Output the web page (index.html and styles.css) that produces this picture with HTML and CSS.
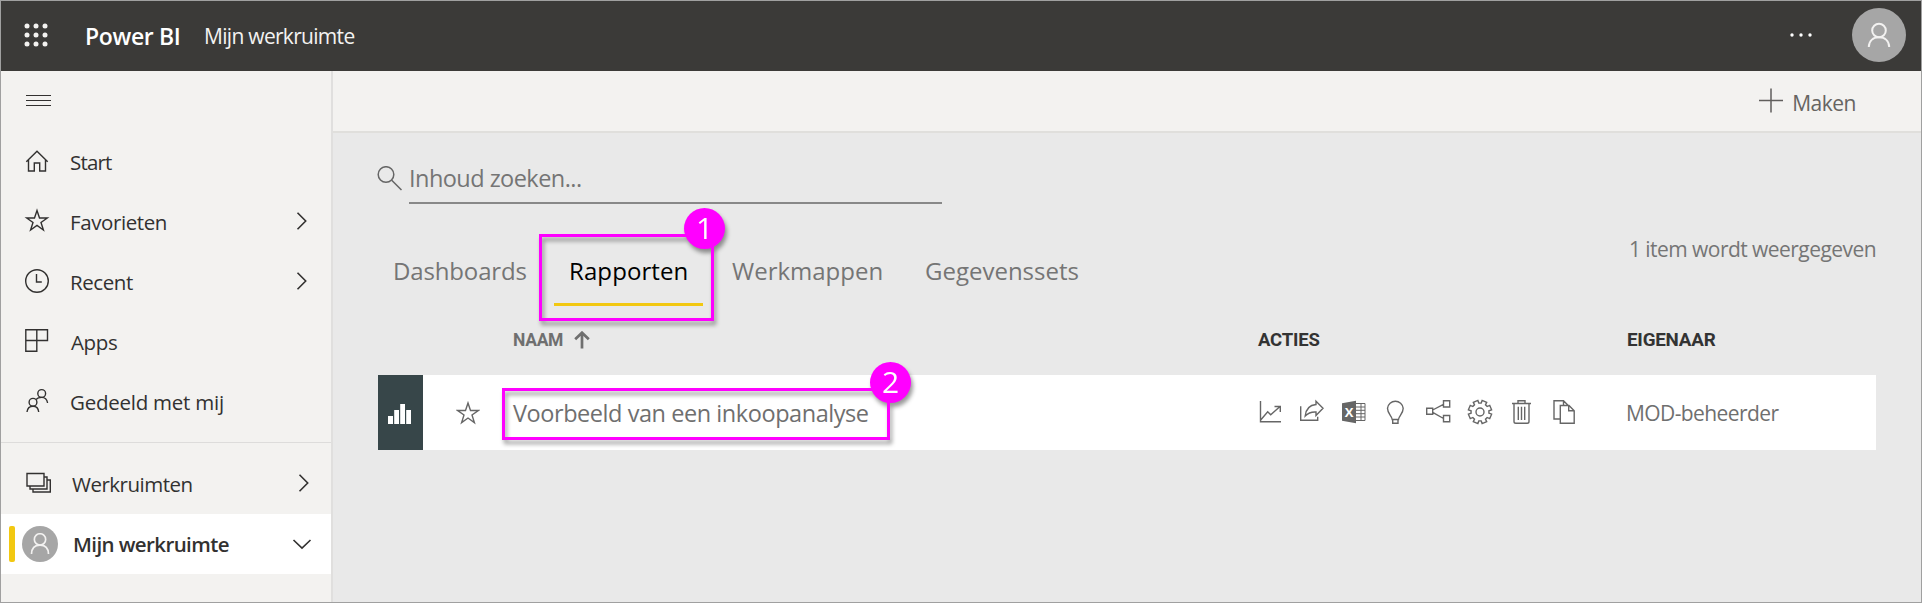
FILE: index.html
```
<!DOCTYPE html>
<html lang="nl">
<head>
<meta charset="utf-8">
<title>Power BI</title>
<link rel="stylesheet" href="styles.css">
</head>
<body>
<div class="app">
  <header class="topbar">
    <svg class="waffle" width="24" height="24" viewBox="0 0 24 24"><g fill="#f3f2f1"><circle cx="3" cy="3" r="2.5"/><circle cx="12" cy="3" r="2.5"/><circle cx="21" cy="3" r="2.5"/><circle cx="3" cy="12" r="2.5"/><circle cx="12" cy="12" r="2.5"/><circle cx="21" cy="12" r="2.5"/><circle cx="3" cy="21" r="2.5"/><circle cx="12" cy="21" r="2.5"/><circle cx="21" cy="21" r="2.5"/></g></svg>
    <span class="brand">Power BI</span>
    <span class="crumb">Mijn werkruimte</span>
    <svg class="more" width="24" height="6" viewBox="0 0 24 6"><g fill="#fff"><circle cx="3" cy="3" r="1.7"/><circle cx="12" cy="3" r="1.7"/><circle cx="21" cy="3" r="1.7"/></g></svg>
    <span class="avatar"><svg width="24" height="26" viewBox="0 0 24 26"><g class="person"><circle cx="12" cy="8.5" r="6.8"/><path d="M1.8 25C2 19 6 15.300 12 15.300S22 19 22.200 25"/></g></svg></span>
  </header>
  <div class="body">
    <nav class="sidebar">
      <div class="nav-item"><svg class="nav-icon" width="26" height="26" viewBox="0 0 26 26"><path d="M1 7.500H26M1 12.500H26M1 17.500H26" stroke-width="1.100"/></svg></div>
      <div class="nav-item"><svg class="nav-icon" width="26" height="26" viewBox="0 0 26 26"><path d="M1.300 13.700L12 3.300 22.700 13.700M3.500 12V23H9.300V15H14.700V23H20.500V12"/></svg><span class="nav-label start">Start</span></div>
      <div class="nav-item"><svg class="nav-icon" width="26" height="26" viewBox="0 0 26 26"><path d="M12 2.500L14.500 10H22.300L16 14.500 18.400 22 12 17.400 5.600 22 8 14.500 1.700 10H9.500Z"/></svg><span class="nav-label fav">Favorieten</span><svg class="chev" width="12" height="20" viewBox="0 0 12 20"><path d="M1.500 1.800L9.700 10 1.500 18.200"/></svg></div>
      <div class="nav-item"><svg class="nav-icon" width="26" height="26" viewBox="0 0 26 26"><circle cx="12" cy="13" r="11.300"/><path d="M11.500 6V14H16.800"/></svg><span class="nav-label rec">Recent</span><svg class="chev" width="12" height="20" viewBox="0 0 12 20"><path d="M1.500 1.800L9.700 10 1.500 18.200"/></svg></div>
      <div class="nav-item"><svg class="nav-icon" width="26" height="26" viewBox="0 0 26 26"><path d="M.8 1.700H22.500V12.500H.8ZM.8 12.500V23.300H11.800V1.700"/></svg><span class="nav-label apps">Apps</span></div>
      <div class="nav-item"><svg class="nav-icon" width="26" height="26" viewBox="0 0 26 26"><circle cx="16.700" cy="5.500" r="3.900"/><circle cx="8" cy="14.300" r="3.900"/><path d="M2 24C2.400 20.500 4.600 18.200 8 18.200S13.400 20.500 13.700 24M11 11.400C12.500 9.800 14 9.400 16.700 9.400 20 9.400 22 11.500 22.600 15"/></svg><span class="nav-label shared">Gedeeld met mij</span></div>
      <div class="nav-gap"></div>
      <div class="nav-item ws"><svg class="nav-icon" width="26" height="26" viewBox="0 0 26 26"><path d="M2 3.500H19V16H2ZM5 16V19H22V7H19M8 19V22H25.300V10H22"/></svg><span class="nav-label wsl">Werkruimten</span><svg class="chev" width="12" height="20" viewBox="0 0 12 20"><path d="M1.500 1.800L9.700 10 1.500 18.200"/></svg></div>
      <div class="nav-item current"><span class="marker"></span><span class="avatar small"><svg width="20" height="22" viewBox="0 0 24 26"><g class="person"><circle cx="12" cy="7.500" r="6.800"/><path d="M1.800 25C2 18 6 14.300 12 14.300S22 18 22.200 25"/></g></svg></span><span class="nav-label mine">Mijn werkruimte</span><svg class="chev down" width="20" height="12" viewBox="0 0 20 12"><path d="M1.500 2L10 10.200 18.500 2"/></svg></div>
    </nav>
    <main class="main">
      <div class="commands"><svg width="26" height="26" viewBox="0 0 26 26"><path d="M0 12.500H24M12 .5V24.500" stroke="#605e5c" stroke-width="1.500"/></svg><span class="create">Maken</span></div>
      <section class="content">
        <div class="search"><svg class="lens" width="26" height="26" viewBox="0 0 26 26"><circle cx="9" cy="8.500" r="7.800"/><path d="M14.700 14.200L24.500 24"/></svg><span class="field">Inhoud zoeken...</span></div>
        <div class="tabs">
          <span class="tab dash">Dashboards</span>
          <span class="tab active">Rapporten<span class="callout first"><b class="num">1</b></span></span>
          <span class="tab work">Werkmappen</span>
          <span class="tab data">Gegevenssets</span>
          <span class="count">1 item wordt weergegeven</span>
        </div>
        <div class="grid head">
          <span></span><span></span>
          <span class="name-head"><span class="naam">NAAM</span><svg width="16" height="18" viewBox="0 0 16 18"><path d="M8 17.500V2M1.200 8.300L8 1.700 14.800 8.300" fill="none" stroke="#6f6f6f" stroke-width="2.700"/></svg></span>
          <span class="acties">ACTIES</span><span class="eig">EIGENAAR</span>
        </div>
        <div class="grid row">
          <span class="type"><svg width="24" height="20" viewBox="0 0 24 20"><path d="M0 12H5V20H0ZM6.200 6H11V20H6.200ZM12.200 0H17V20H12.200ZM18.200 6H23V20H18.200Z" fill="#fff"/></svg></span>
          <span class="star"><svg class="line" width="24" height="24" viewBox="0 0 24 24"><path d="M12 2L14.500 9.500H22.300L16 14 18.400 21.600 12 17 5.600 21.600 8 14 1.700 9.500H9.500Z"/></svg></span>
          <span class="name"><span class="report">Voorbeeld van een inkoopanalyse</span><span class="callout second"><b class="num">2</b></span></span>
          <span class="actions">
            <svg class="line" width="26" height="26" viewBox="0 0 26 26"><path d="M3.500 2V22.800H24M3.700 21L10.700 12.700 13.700 15.700 23 7.500M17.500 7.500H23.300V13"/></svg>
            <svg class="line" width="26" height="26" viewBox="1 0 26 26"><path d="M2.700 7.300V21.300H19.700V17.700M18 2.300L25 9.300 18 16.500V13C13 12.700 10 14 7.200 17 8 9.500 12 6 18 5.500Z"/></svg>
            <svg class="line" width="26" height="26" viewBox="0 0 26 26"><path d="M1 4.300L15 1.700V24.300L1 21.700Z" fill="#666" stroke="none"/><path d="M15 4.500H24V21.500H15M20 4.500V21.500M15 8H24M15 11.300H24M15 14.700H24M15 18H24" stroke-width="1"/><text class="xl" x="8" y="17.800" text-anchor="middle">X</text></svg>
            <svg class="line" width="26" height="26" viewBox="1 0 26 26"><path d="M10.200 20.500C10 17 5.500 15 5.500 9.300A7.900 7.900 0 0 1 21.200 9.300C21.200 15 16.700 17 16.500 20.500ZM10.700 20.500V24.300H16V20.500"/></svg>
            <svg class="line" width="26" height="26" viewBox="0 0 26 26"><path d="M1.700 9.200H7.700V15.200H1.700ZM18.500 1.800H24.700V8H18.500ZM18.500 16.500H24.700V22.700H18.500ZM7.700 11L18.500 5.300M7.700 13.300L18.500 19.500"/></svg>
            <svg class="line" width="26" height="26" viewBox="0 0 26 26"><path d="M21.920 14.180L24.600 15.150 22.720 19.680 20.140 18.480 18.480 20.140 19.680 22.720 15.150 24.600 14.180 21.920H11.820L10.850 24.600 6.320 22.720 7.520 20.140 5.860 18.480 3.280 19.680 1.400 15.150 4.080 14.180V11.820L1.400 10.850 3.280 6.320 5.860 7.520 7.520 5.860 6.320 3.280 10.850 1.400 11.820 4.080H14.180L15.150 1.400 19.680 3.280 18.480 5.860 20.140 7.520 22.720 6.320 24.600 10.850 21.920 11.820Z"/><circle cx="13" cy="13" r="4"/></svg>
            <svg class="line" width="26" height="26" viewBox="1 0 26 26"><path d="M4 4.500H23M10 4.500V1.800H17V4.500M6 4.500V22.500Q6 24.300 7.800 24.300H19.200Q21 24.300 21 22.500V4.500M10.300 7.700V21M13.500 7.700V21M16.700 7.700V21"/></svg>
            <svg class="line" width="26" height="26" viewBox="0 0 26 26"><path d="M9 20H3V1.800H12.500L17 6.300M9.300 6.500H18L23.200 11.700V24.300H9.300ZM17.700 6.500V11.700H23.200M12.500 1.800V6.300"/></svg>
          </span>
          <span class="owner">MOD-beheerder</span>
        </div>
      </section>
    </main>
  </div>
</div>
</body>
</html>
```
FILE: styles.css
```
* { box-sizing: border-box; }
body { margin: 0; font-family: "Open Sans", "Noto Sans", sans-serif; }
svg { display: block; flex: none; }
span { white-space: nowrap; }

.app { height: 603px; border: 1px solid #a0a0a0; display: flex; flex-direction: column; overflow: hidden; }

.topbar { height: 70px; flex: none; background: #3b3a38; display: flex; align-items: center; padding: 0 15px 2px 23px; }
.waffle { margin-bottom: 1px; }
.brand { margin-left: 37px; font-size: 23px; font-weight: 600; letter-spacing: -.35px; color: #fff; width: 119px; padding-top: 2px; }
.crumb { font-size: 21px; letter-spacing: -.7px; color: #f3f2f1; padding-top: 1px; }
.more { margin-left: auto; margin-right: 39px; }
.avatar { width: 54px; height: 54px; border-radius: 50%; background: #a6a6a6; display: flex; align-items: center; justify-content: center; flex: none; }
.avatar.small { width: 36px; height: 36px; }
.person { fill: none; stroke: #f3f2f1; stroke-width: 2; }

.body { flex: 1; display: flex; min-height: 0; }
.sidebar { width: 332px; flex: none; background: #f3f2f0; border-right: 2px solid #e0dfde; }
.nav-item { height: 60px; display: flex; align-items: center; padding: 0 23px 0 24px; color: #323130; }
.nav-icon { fill: none; stroke: #323130; stroke-width: 1.400; overflow: visible; }
.nav-label { margin-left: 19px; font-size: 20.500px; padding-top: 1px; }
.start { letter-spacing: -.8px; }
.fav { letter-spacing: -.4px; }
.rec { letter-spacing: -.41px; }
.apps { letter-spacing: -.35px; margin-left: 20px; }
.shared { letter-spacing: -.24px; }
.wsl { letter-spacing: -.5px; margin-left: 21px; }
.mine { font-size: 20.500px; font-weight: 600; letter-spacing: -.6px; margin-left: 15px; padding-top: 0; padding-bottom: 1px; }
.chev { margin-left: auto; fill: none; stroke: #323130; stroke-width: 1.600; }
.nav-gap { height: 12px; border-bottom: 1px solid #dddcdb; }
.ws { height: 71px; padding-right: 21px; padding-top: 9px; }
.current { background: #fff; padding: 0 19px 0 8px; }
.marker { width: 6px; height: 36px; border-radius: 2px; background: #f2c811; margin-right: 7px; }

.main { flex: 1; background: #e9e9e9; min-width: 0; }
.commands { height: 62px; background: #f3f2f0; border-bottom: 2px solid #e0dfdc; display: flex; align-items: center; justify-content: flex-end; padding-right: 65px; }
.create { margin-left: 7px; font-size: 21px; letter-spacing: -.5px; color: #666462; padding-top: 3px; }

.content { padding: 21px 45px 0 44px; }
.search { height: 50px; display: flex; align-items: stretch; }
.lens { fill: none; stroke: #666; stroke-width: 1.500; margin-top: 12px; }
.field { margin-left: 6px; width: 533px; border-bottom: 2px solid #888; font-size: 23.500px; letter-spacing: -.54px; line-height: 48px; color: #757575; }

.tabs { height: 102px; display: flex; align-items: flex-end; }
.tab { height: 71px; padding: 0 16px; margin-right: 11px; width: 166px; border-bottom: 3px solid transparent; font-size: 24px; line-height: 72px; color: #757575; position: relative; }
.dash { letter-spacing: -.15px; }
.tab.active { width: 149px; padding-left: 15px; color: #000; letter-spacing: .1px; border-bottom-color: #f2c811; }
.work { width: 184px; margin-left: 0; padding-left: 18px; margin-right: 11px; }
.data { width: 190px; }
.count { margin-left: auto; align-self: flex-end; font-size: 21px; letter-spacing: -.55px; line-height: 30px; margin-bottom: 42px; color: #757575; }

.callout { position: absolute; border: 3px solid #f0f; filter: drop-shadow(2px 4px 2px rgba(0,0,0,.4)); }
.first { left: -15px; top: -1px; width: 175px; height: 87px; }
.second { left: -11px; top: 13px; width: 388px; height: 52px; }
.num { position: absolute; width: 41px; height: 41px; border-radius: 50%; background: #f0f; color: #fff; font: 30px/40px "Open Sans", sans-serif; text-align: center; letter-spacing: 0; right: -14px; top: -29px; }
.second .num { right: -24px; }

.grid { display: grid; grid-template-columns: 45px 90px 744px 371px 1fr; align-items: center; margin-left: 1px; }
.head { height: 69px; font-family: Roboto, sans-serif; font-size: 19px; font-weight: 700; color: #333; padding-bottom: 1px; }
.name-head { display: flex; align-items: center; gap: 12px; color: #6f6f6f; }
.naam { width: 49px; letter-spacing: -.3px; font-size: 17.500px; }
.acties { letter-spacing: -.2px; font-size: 18.500px; padding-left: 1px; }
.eig { letter-spacing: -.2px; font-size: 18.800px; margin-left: -1px; }
.row { height: 75px; background: #fff; color: #6f6f6f; }
.type { height: 75px; background: #374649; display: flex; align-items: center; justify-content: center; padding: 3px 2px 0 0; }
.star { padding-left: 33px; }
.line { fill: none; stroke: #666; stroke-width: 1.400; }
.xl { font: 700 13px "Open Sans", sans-serif; fill: #fff; stroke: none; }
.name { position: relative; height: 75px; line-height: 77px; font-size: 23.500px; letter-spacing: -.44px; }
.actions { display: flex; gap: 16px; padding-bottom: 1px; }
.owner { font-size: 21px; letter-spacing: -.59px; margin-left: -2px; }
```
